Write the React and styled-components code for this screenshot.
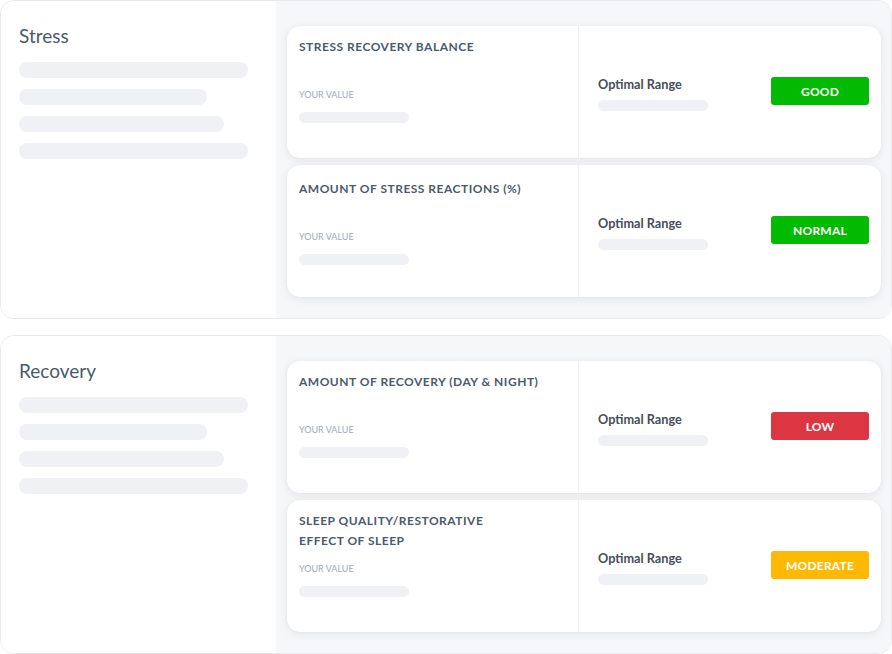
import React from 'react'
import styled, { createGlobalStyle } from 'styled-components'

const GlobalStyle = createGlobalStyle`
  * { box-sizing: border-box; }
  body {
    margin: 0;
    background: #ffffff;
    font-family: Lato, "Open Sans", sans-serif;
  }
`

const sections = [
  {
    title: 'Stress',
    metrics: [
      { name: 'Stress recovery balance', status: 'GOOD', tone: 'good' },
      { name: 'Amount of stress reactions (%)', status: 'NORMAL', tone: 'good', shift: 3 },
    ],
  },
  {
    title: 'Recovery',
    metrics: [
      { name: 'Amount of recovery (day & night)', status: 'LOW', tone: 'low' },
      { name: 'Sleep quality/restorative effect of sleep', status: 'MODERATE', tone: 'moderate', wrap: true },
    ],
  },
]

const tones = {
  good: '#02ba02',
  low: '#dc3643',
  moderate: '#ffb803',
}

function Metric({ metric }) {
  return (
    <Card>
      <ValueSide $shift={metric.shift || 0}>
        <MetricName $wrap={metric.wrap}>{metric.name}</MetricName>
        <ValueLabel>Your value</ValueLabel>
        <Bar $width={110} $height={11} />
      </ValueSide>
      <RangeSide>
        <RangeGroup>
          <RangeLabel>Optimal Range</RangeLabel>
          <Bar $width={110} $height={11} />
        </RangeGroup>
        <Badge $tone={metric.tone}>{metric.status}</Badge>
      </RangeSide>
    </Card>
  )
}

function Section({ section }) {
  return (
    <Panel>
      <Intro>
        <Heading>{section.title}</Heading>
        <Lines>
          <Bar $width={229} $height={16} />
          <Bar $width={188} $height={16} />
          <Bar $width={205} $height={16} />
          <Bar $width={229} $height={16} />
        </Lines>
      </Intro>
      <Metrics>
        {section.metrics.map((m) => (
          <Metric key={m.name} metric={m} />
        ))}
      </Metrics>
    </Panel>
  )
}

export default function App() {
  return (
    <>
      <GlobalStyle />
      <Page>
        {sections.map((s) => (
          <Section key={s.title} section={s} />
        ))}
      </Page>
    </>
  )
}

const Page = styled.div`
  width: 892px;
  display: flex;
  flex-direction: column;
  gap: 16px;
`

const Panel = styled.div`
  width: 892px;
  height: 319px;
  display: grid;
  grid-template-columns: 275px 1fr;
  border: 1px solid #e7e9ee;
  border-radius: 14px;
  overflow: hidden;
  background: #ffffff;
`

const Intro = styled.div`
  padding: 23px 18px 0;
  background: #ffffff;
`

const Heading = styled.h2`
  margin: 0;
  font-size: 19px;
  line-height: 24px;
  font-weight: 400;
  color: #4a5a6e;
`

const Lines = styled.div`
  margin-top: 14px;
  display: flex;
  flex-direction: column;
  gap: 11px;
`

const Bar = styled.div`
  width: ${(p) => p.$width}px;
  height: ${(p) => p.$height}px;
  border-radius: ${(p) => p.$height / 2}px;
  background: #f0f1f5;
`

const Metrics = styled.div`
  background: #f6f7f9;
  padding: 25px 10px 20px 11px;
  display: flex;
  flex-direction: column;
  gap: 7px;
`

const Card = styled.div`
  height: 132px;
  display: grid;
  grid-template-columns: 292px 1fr;
  background: #ffffff;
  border-radius: 13px;
  box-shadow: 0 2px 8px rgba(30, 40, 60, 0.09), 0 0 1px rgba(30, 40, 60, 0.08);
`

const ValueSide = styled.div`
  padding: ${(p) => 11 + p.$shift}px 12px 10px;
  border-right: 1px solid #eef0f4;
  display: flex;
  flex-direction: column;
`

const MetricName = styled.div`
  min-height: 40px;
  max-width: ${(p) => (p.$wrap ? '200px' : 'none')};
  font-size: 12px;
  line-height: 20px;
  font-weight: 700;
  letter-spacing: 0.5px;
  text-transform: uppercase;
  color: #4b5a6c;
`

const ValueLabel = styled.div`
  margin-top: 12px;
  margin-bottom: 11px;
  font-size: 9px;
  line-height: 12px;
  font-weight: 400;
  text-transform: uppercase;
  color: #a0a8b8;
`

const RangeSide = styled.div`
  display: flex;
  align-items: center;
  justify-content: space-between;
  padding: 0 12px 2px 19px;
`

const RangeGroup = styled.div`
  display: flex;
  flex-direction: column;
  gap: 8px;
  padding-top: 4px;
`

const RangeLabel = styled.div`
  font-size: 12.7px;
  line-height: 16px;
  font-weight: 700;
  color: #474c58;
`

const Badge = styled.div`
  width: 98px;
  height: 28px;
  display: flex;
  align-items: center;
  justify-content: center;
  border-radius: 3px;
  background: ${(p) => tones[p.$tone]};
  color: #ffffff;
  font-size: 12px;
  font-weight: 700;
  letter-spacing: 0.2px;
`
